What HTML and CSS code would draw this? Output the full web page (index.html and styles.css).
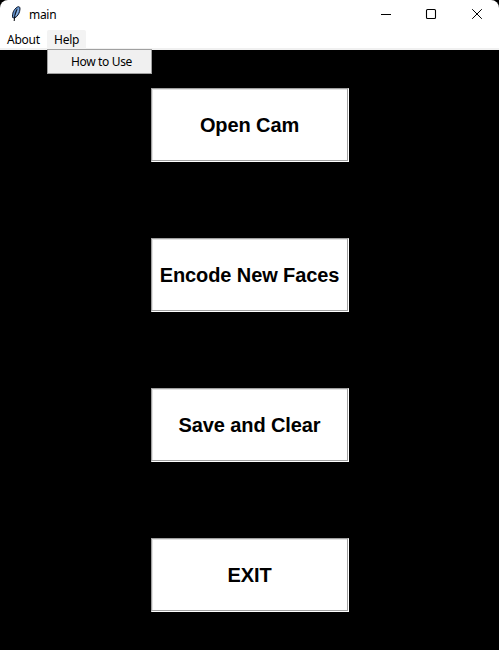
FILE: index.html
```html
<!DOCTYPE html>
<html lang="en">
<head>
<meta charset="utf-8">
<title>main</title>
<link rel="stylesheet" href="styles.css">
</head>
<body>
<div class="window">
  <header class="titlebar">
    <svg class="feather" width="10" height="16" viewBox="0 0 10 16">
      <path d="M1.6 11.5C1 8 2.4 3.4 6.4 1C8.2 .1 9 1 9 3C8.8 6.6 7.2 10 3.5 12.2Z" fill="#5f8fcc" stroke="#141d2e" stroke-width="1"/>
      <path d="M6.4 3C5 5 3.6 8.6 3.2 15" fill="none" stroke="#101318" stroke-width="1.1"/>
      <path d="M7.3 2.6C7 5.6 6 8 4.8 9.6" fill="none" stroke="#9fc0e8" stroke-width="1"/>
    </svg>
    <span class="title">main</span>
    <div class="controls">
      <svg width="46" height="28" viewBox="0 0 46 28"><path d="M16 14.5H26" stroke="#000"/></svg>
      <svg width="46" height="28" viewBox="0 0 46 28"><rect x="15.5" y="9.5" width="9" height="9" rx="1" fill="none" stroke="#000" stroke-width="1.1"/></svg>
      <svg width="46" height="28" viewBox="0 0 46 28"><path d="M15.2 9.2L24.8 18.8M24.8 9.2L15.2 18.8" stroke="#000"/></svg>
    </div>
  </header>
  <nav class="menubar">
    <div class="menu">About</div>
    <div class="menu open">Help
      <div class="dropdown">How to Use</div>
    </div>
  </nav>
  <main class="actions">
    <button class="action">Open Cam</button>
    <button class="action">Encode New Faces</button>
    <button class="action">Save and Clear</button>
    <button class="action">EXIT</button>
  </main>
</div>
</body>
</html>
```
FILE: styles.css
```css
* { box-sizing: border-box; }
body { margin: 0; background: #000; }
.window {
  width: 499px;
  height: 650px;
  display: flex;
  flex-direction: column;
  overflow: hidden;
  border-radius: 8px;
  background: #000;
  color: #000;
  font: 12px/16px "Noto Sans", "Open Sans", sans-serif;
}
.titlebar {
  height: 30px;
  display: flex;
  flex: none;
  background: #fff;
  padding-left: 11px;
}
.feather { margin-top: 6px; }
.title { margin: 7px 0 0 8px; letter-spacing: -0.3px; }
.controls { display: flex; margin-left: auto; margin-right: -4px; }
.menubar {
  height: 20px;
  display: flex;
  flex: none;
  background: #fff;
  border-bottom: 2px solid #f0f0f0;
}
.menu {
  position: relative;
  height: 20px;
  padding: 2px 7px 0;
  letter-spacing: -0.25px;
}
.menu.open { background: #f3f3f3; border-radius: 2px 2px 0 0; width: 39px; }
.menu:first-child { width: 47px; }
.dropdown {
  position: absolute;
  left: 0;
  top: 19px;
  width: 105px;
  height: 25px;
  padding: 4px 0 0 23px;
  border: 1px solid #a0a0a0;
  background: #f0f0f0;
  letter-spacing: -0.35px;
  white-space: nowrap;
}
.actions {
  display: flex;
  flex-direction: column;
  align-items: center;
  gap: 76px;
  padding: 38px 0 0 1px;
}
.action {
  width: 198px;
  height: 74px;
  padding: 0 1px 0 0;
  border: 1px solid;
  border-color: #a0a0a0 #fff #fff #a0a0a0;
  border-radius: 0;
  background: #fff;
  box-shadow: inset -1px -1px #a0a0a0, inset 1px 1px #e3e3e3;
  color: #000;
  font: bold 20px/24px "Liberation Sans", Arial, sans-serif;
  letter-spacing: -0.1px;
  white-space: nowrap;
}
```
